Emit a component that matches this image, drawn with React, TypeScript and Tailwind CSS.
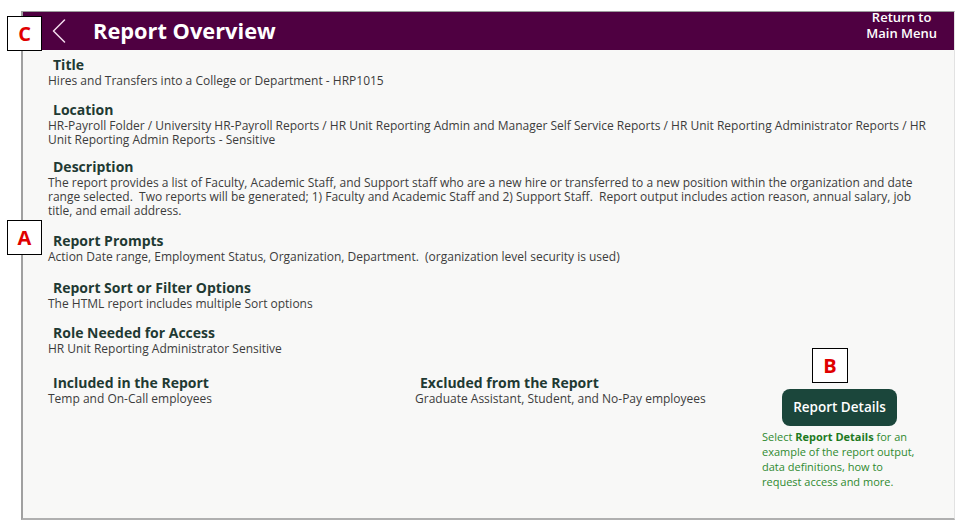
function Section({ title, children, className = '' }: { title: string; children: React.ReactNode; className?: string }) {
  return (
    <div className={className}>
      <h3 className="-mt-[1px] pl-[5px] text-[14px] font-bold leading-[19px] text-[#1f3a33]">{title}</h3>
      <p className="text-[12px] leading-[14px] text-[#3c3c3c]">{children}</p>
    </div>
  );
}

function Tag({ letter, className }: { letter: string; className: string }) {
  return (
    <div className={`absolute flex items-center justify-center border border-black bg-white text-[20px] font-bold text-[#e00000] ${className}`}>
      {letter}
    </div>
  );
}

export default function App() {
  return (
    <div className="relative min-h-[527px] w-[963px] bg-white" style={{ fontFamily: '"Open Sans", "Noto Sans", sans-serif' }}>
      <div className="ml-[21px] pt-[11px]">
        <div className="flex h-[509px] w-[934px] flex-col border-t border-l-2 border-b-2 border-r border-t-[#9c9c9c] border-l-[#a0a0a0] border-b-[#b0b0b0] border-r-[#e2e2e2] bg-[#f8f8f7]">
          <header className="flex h-[38px] items-center bg-[#4f0041] text-white">
            <svg className="ml-[29px]" width="14" height="24" viewBox="0 0 14 24" fill="none">
              <polyline points="12.5,1 1.5,12 12.5,23" stroke="#f3dcec" strokeWidth="1.5" strokeLinecap="round" strokeLinejoin="round" />
            </svg>
            <h1 className="ml-[27px] text-[21.8px] font-bold leading-none">Report Overview</h1>
            <div className="mr-[17px] ml-auto mt-[-3px] self-start text-center text-[13px] font-semibold leading-[16px]">
              Return to
              <br />
              Main Menu
            </div>
          </header>

          <div className="pl-[25px] pr-[20px] pt-[6px]">
            <Section title="Title">Hires and Transfers into a College or Department - HRP1015</Section>
            <Section title="Location" className="mt-[13px]">
              HR-Payroll Folder / University HR-Payroll Reports / HR Unit Reporting Admin and Manager Self Service Reports / HR Unit Reporting Administrator Reports / HR Unit Reporting Admin Reports - Sensitive
            </Section>
            <Section title="Description" className="mt-[11px]">
              The report provides a list of Faculty, Academic Staff, and Support staff who are a new hire or transferred to a new position within the organization and date range selected.&nbsp; Two reports will be generated; 1) Faculty and Academic Staff and 2) Support Staff.&nbsp; Report output includes action reason, annual salary, job title, and email address.
            </Section>
            <Section title="Report Prompts" className="mt-[14px]">
              Action Date range, Employment Status, Organization, Department.&nbsp; (organization level security is used)
            </Section>
            <Section title="Report Sort or Filter Options" className="mt-[15px]">
              The HTML report includes multiple Sort options
            </Section>
            <Section title="Role Needed for Access" className="mt-[13px]">
              HR Unit Reporting Administrator Sensitive
            </Section>

            <div className="mt-[18px] flex">
              <Section title="Included in the Report" className="w-[367px]">Temp and On-Call employees</Section>
              <Section title="Excluded from the Report" className="w-[347px]">Graduate Assistant, Student, and No-Pay employees</Section>
              <div className="w-[160px] pt-[15px]">
                <button className="ml-[20px] flex h-[37px] w-[115px] items-center justify-center rounded-[8px] bg-[#1b463b] text-[13.5px] font-semibold text-white">
                  Report Details
                </button>
                <p className="mt-[3px] text-[11px] leading-[15px] text-[#2f8a2f]">
                  Select <span className="font-bold text-[#1e7a1e]">Report Details</span> for an example of the report output, data definitions, how to request access and more.
                </p>
              </div>
            </div>
          </div>
        </div>
      </div>

      <Tag letter="C" className="left-[7px] top-[16px] h-[35px] w-[35px]" />
      <Tag letter="A" className="left-[7px] top-[220px] h-[35px] w-[35px]" />
      <Tag letter="B" className="left-[812px] top-[348px] h-[35px] w-[36px]" />
    </div>
  );
}
